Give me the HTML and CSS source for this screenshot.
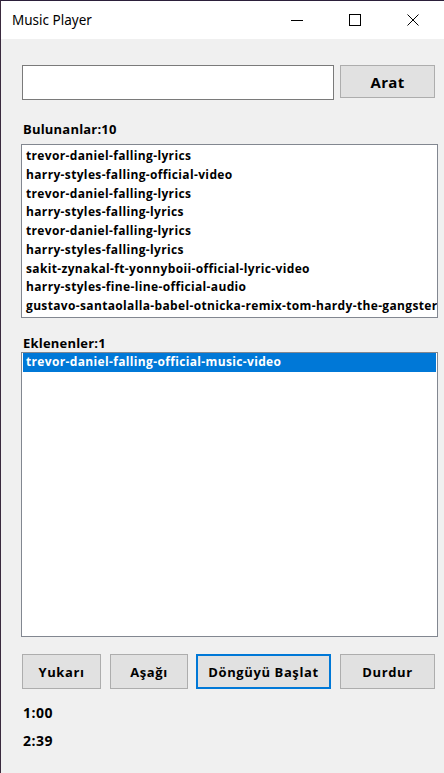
FILE: index.html
```html
<!DOCTYPE html>
<html lang="tr">
<head>
  <meta charset="UTF-8" />
  <title>Music Player</title>
  <link rel="stylesheet" href="styles.css">
</head>
<body>
  <div class="window">
    <div class="titlebar">
      <span class="title">Music Player</span>
      <div class="controls">
        <span class="ctl">
          <svg width="12" height="12" viewBox="0 0 12 12"><path d="M0 6.5H12" stroke="#000" stroke-width="1"/></svg>
        </span>
        <span class="ctl">
          <svg width="12" height="12" viewBox="0 0 12 12"><rect x="0.5" y="0.5" width="11" height="11" fill="none" stroke="#000" stroke-width="1"/></svg>
        </span>
        <span class="ctl">
          <svg width="12" height="12" viewBox="0 0 12 12"><path d="M0.5 0.5L11.5 11.5M11.5 0.5L0.5 11.5" stroke="#000" stroke-width="1"/></svg>
        </span>
      </div>
    </div>

    <div class="content">
      <div class="search">
        <input class="search-box" type="text">
        <button class="btn btn-search">Arat</button>
      </div>

      <div class="label label-found">Bulunanlar:10</div>
      <div class="list list-found">
        <div class="item">trevor-daniel-falling-lyrics</div>
        <div class="item">harry-styles-falling-official-video</div>
        <div class="item">trevor-daniel-falling-lyrics</div>
        <div class="item">harry-styles-falling-lyrics</div>
        <div class="item">trevor-daniel-falling-lyrics</div>
        <div class="item">harry-styles-falling-lyrics</div>
        <div class="item">sakit-zynakal-ft-yonnyboii-official-lyric-video</div>
        <div class="item">harry-styles-fine-line-official-audio</div>
        <div class="item">gustavo-santaolalla-babel-otnicka-remix-tom-hardy-the-gangster</div>
      </div>

      <div class="label label-added">Eklenenler:1</div>
      <div class="list list-added">
        <div class="item selected">trevor-daniel-falling-official-music-video</div>
      </div>

      <div class="actions">
        <button class="btn btn-up">Yukarı</button>
        <button class="btn btn-down">Aşağı</button>
        <button class="btn btn-loop focused">Döngüyü Başlat</button>
        <button class="btn btn-stop">Durdur</button>
      </div>

      <div class="time time-current">1:00</div>
      <div class="time time-total">2:39</div>
    </div>
  </div>
</body>
</html>
```

FILE: styles.css
```css
* {
  margin: 0;
  padding: 0;
  box-sizing: border-box;
}

body {
  width: 444px;
  height: 773px;
  overflow: hidden;
  background: #f0f0f0;
  font-family: 'Open Sans', 'Noto Sans', sans-serif;
}

.window {
  height: 773px;
  border-top: 1px solid #2b1f3a;
  border-left: 1px solid #3a2a3e;
  background: #f0f0f0;
}

.titlebar {
  height: 38px;
  background: #ffffff;
  display: flex;
  align-items: center;
  justify-content: space-between;
}

.title {
  padding-left: 11px;
  font-family: 'Noto Sans', sans-serif;
  font-size: 13.5px;
  color: #000;
}

.controls {
  display: flex;
  padding-right: 2px;
}

.ctl {
  width: 58px;
  height: 38px;
  display: flex;
  align-items: center;
  justify-content: center;
}

.content {
  padding: 26px 0 0 20px;
}

.search {
  display: flex;
  align-items: flex-start;
  gap: 6px;
  padding-left: 1px;
}

.search-box {
  width: 312px;
  height: 35px;
  border: 1px solid #7a7a7a;
  background: #fff;
  outline: none;
}

.btn {
  height: 33px;
  border: 1px solid #adadad;
  background: #e1e1e1;
  font-family: 'Open Sans', sans-serif;
  font-weight: 700;
  font-size: 13px;
  letter-spacing: 0.6px;
  color: #000;
}

.btn-search {
  width: 95px;
  font-size: 15px;
  letter-spacing: 0.3px;
}

.label {
  font-weight: 700;
  font-size: 13px;
  letter-spacing: 0.2px;
  color: #000;
  height: 18px;
  line-height: 18px;
}

.label-found {
  margin-top: 20px;
  padding-left: 2px;
}

.list {
  width: 417px;
  border: 1px solid #828790;
  background: #fff;
  overflow: hidden;
  padding: 2px 1px;
}

.list-found {
  margin-top: 6px;
  height: 174px;
}

.item {
  height: 18.75px;
  line-height: 18px;
  padding-left: 3px;
  font-weight: 700;
  font-size: 12px;
  letter-spacing: 0.35px;
  white-space: nowrap;
  color: #000;
}

.label-added {
  margin-top: 16px;
  padding-left: 2px;
}

.list-added {
  margin-top: 0;
  height: 285px;
  padding-top: 0;
}

.item.selected {
  background: #0078d7;
  color: #fff;
  height: 19px;
}

.actions {
  display: flex;
  margin-top: 17px;
  padding-left: 1px;
}

.btn-up {
  width: 79px;
  height: 35px;
}

.btn-down {
  width: 78px;
  height: 35px;
  margin-left: 9px;
}

.btn-loop {
  width: 135px;
  height: 35px;
  margin-left: 8px;
}

.btn-loop.focused {
  border: 2px solid #0078d7;
}

.btn-stop {
  width: 95px;
  height: 35px;
  margin-left: 9px;
}

.time {
  font-weight: 700;
  font-size: 14px;
  letter-spacing: 0.5px;
  height: 18px;
  line-height: 18px;
  padding-left: 2px;
}

.time-current {
  margin-top: 15px;
}

.time-total {
  margin-top: 10px;
}
```
